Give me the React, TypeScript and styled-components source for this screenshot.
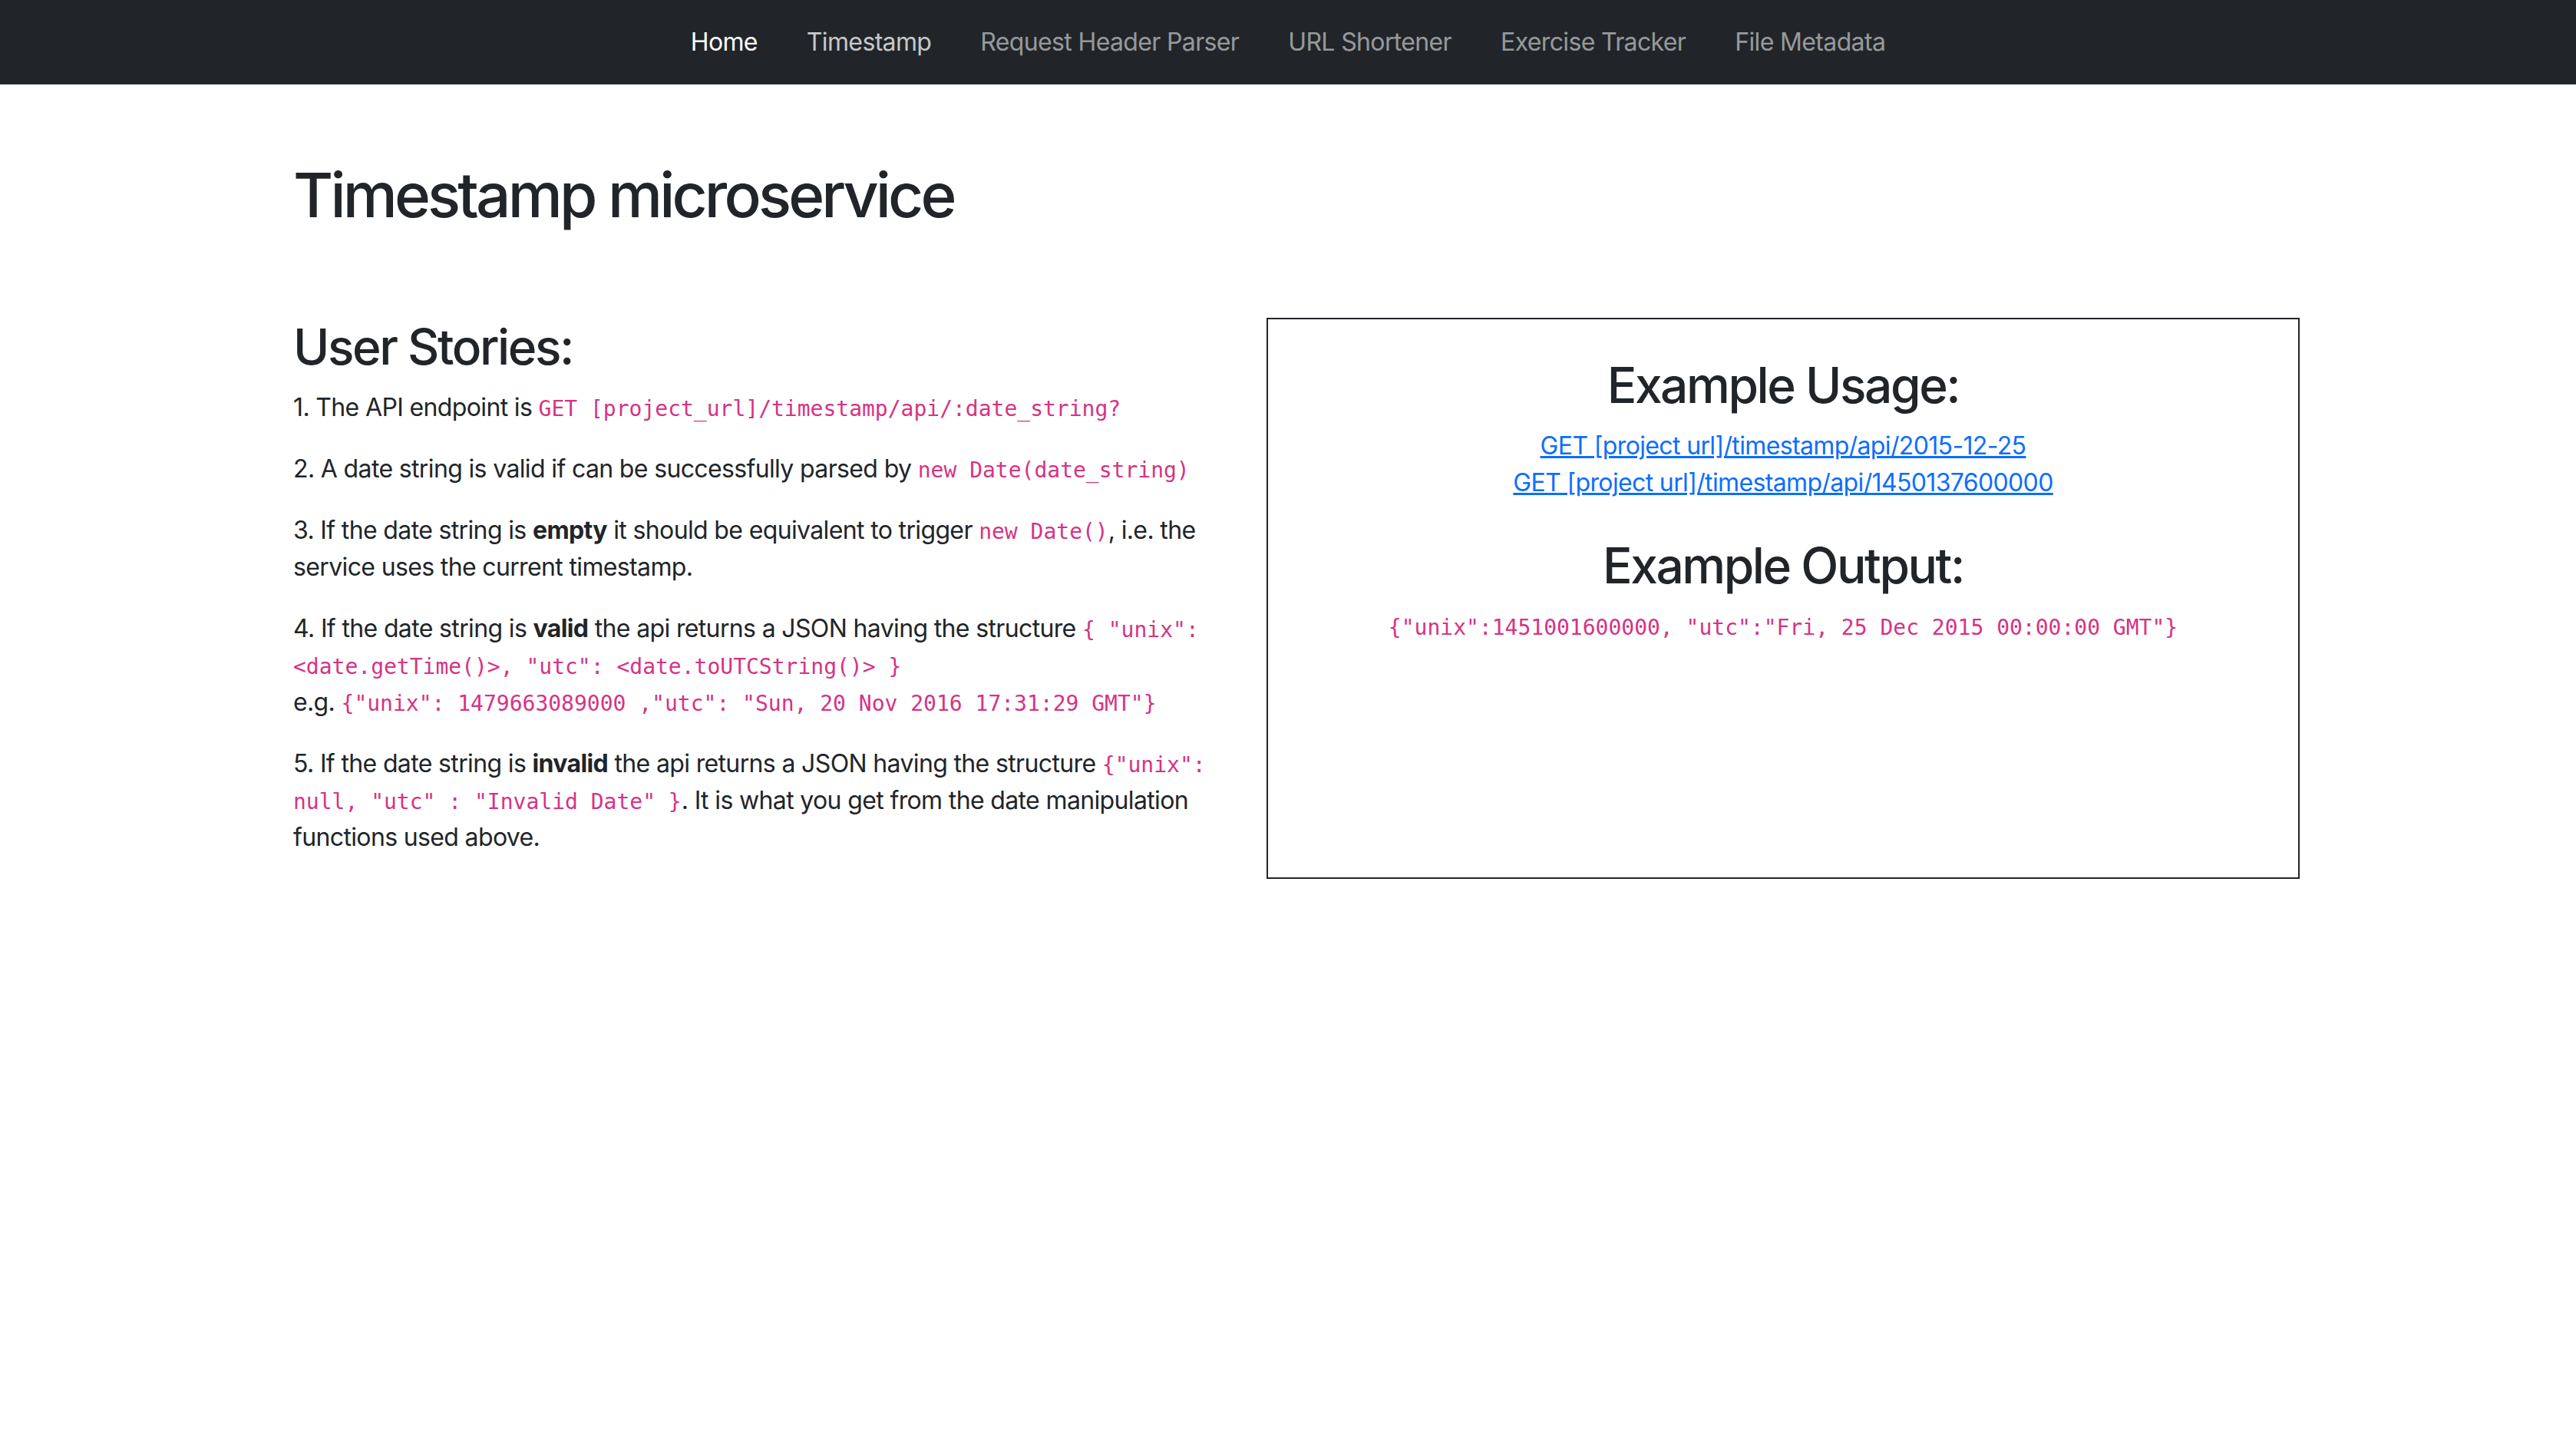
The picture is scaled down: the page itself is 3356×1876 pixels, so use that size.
import React from 'react';
import styled, { createGlobalStyle } from 'styled-components';

const GlobalStyle = createGlobalStyle`
  body {
    margin: 0;
    background: #fff;
    color: #212529;
    font-family: Inter, "Noto Sans", "Liberation Sans", sans-serif;
    font-size: 32px;
    line-height: 48px;
    letter-spacing: -0.02em;
  }
`;

// top bar
const Navbar = styled.nav`
  height: 110px;
  background: #212529;
  display: flex;
  justify-content: center;
  align-items: center;
`;
const NavLink = styled.a<{ $state?: 'active' | 'hover' }>`
  padding: 16px 32px;
  font-size: 32px;
  line-height: 48px;
  text-decoration: none;
  cursor: pointer;
  color: ${(p) =>
    p.$state === 'active'
      ? '#fff'
      : p.$state === 'hover'
      ? 'rgba(255,255,255,0.75)'
      : 'rgba(255,255,255,0.55)'};
`;

const Container = styled.main`
  width: 2614px;
  margin: 96px 0 0 382px;
`;
const Title = styled.h1`
  font-size: 80px;
  font-weight: 500;
  line-height: 1.2;
  letter-spacing: -0.048em;
  margin: 0 0 16px;
`;
const Row = styled.div`
  display: flex;
  align-items: flex-start;
  gap: 28px;
  margin-top: 112px;
`;
const Stories = styled.section`
  flex: 0 0 1240px;
`;
const Heading = styled.h2<{ $spaced?: boolean }>`
  font-size: 64px;
  font-weight: 500;
  line-height: 1.2;
  letter-spacing: -0.038em;
  margin: ${(p) => (p.$spaced ? '46px' : '0')} 0 16px;
`;
const Para = styled.p`
  margin: 0 0 32px;
`;
const Code = styled.code`
  font-family: "DejaVu Sans Mono", "Liberation Mono", monospace;
  font-size: 28px;
  line-height: 1;
  letter-spacing: 0;
  color: #d63384;
  word-wrap: break-word;
`;
const ExampleBox = styled.section`
  flex: 1;
  height: 731px;
  box-sizing: border-box;
  border: 2px solid #212529;
  padding: 48px;
  text-align: center;
`;
const Links = styled.div`
  margin-bottom: 16px;
`;
const Link = styled.a`
  display: block;
  color: #0d6efd;
  text-decoration: underline;
`;

const navItems = [
  { label: 'Home', state: 'active' as const },
  { label: 'Timestamp', state: 'hover' as const },
  { label: 'Request Header Parser' },
  { label: 'URL Shortener' },
  { label: 'Exercise Tracker' },
  { label: 'File Metadata' },
];

function App() {
  return (
    <>
      <GlobalStyle />
      <Navbar>
        {navItems.map((n) => (
          <NavLink key={n.label} $state={n.state}>
            {n.label}
          </NavLink>
        ))}
      </Navbar>
      <Container>
        <Title>Timestamp microservice</Title>
        <Row>
          <Stories>
            <Heading>User Stories:</Heading>
            <Para>
              1. The API endpoint is <Code>GET [project_url]/timestamp/api/:date_string?</Code>
            </Para>
            <Para>
              2. A date string is valid if can be successfully parsed by <Code>new Date(date_string)</Code>
            </Para>
            <Para>
              3. If the date string is <b>empty</b> it should be equivalent to trigger <Code>new Date()</Code>, i.e. the
              service uses the current timestamp.
            </Para>
            <Para>
              4. If the date string is <b>valid</b> the api returns a JSON having the structure{' '}
              <Code>{'{ "unix": <date.getTime()>, "utc": <date.toUTCString()> }'}</Code>
              <br />
              e.g. <Code>{'{"unix": 1479663089000 ,"utc": "Sun, 20 Nov 2016 17:31:29 GMT"}'}</Code>
            </Para>
            <Para>
              5. If the date string is <b>invalid</b> the api returns a JSON having the structure{' '}
              <Code>{'{"unix": null, "utc" : "Invalid Date" }'}</Code>. It is what you get from the date manipulation
              functions used above.
            </Para>
          </Stories>
          <ExampleBox>
            <Heading>Example Usage:</Heading>
            <Links>
              <Link href="#">GET [project url]/timestamp/api/2015-12-25</Link>
              <Link href="#">GET [project url]/timestamp/api/1450137600000</Link>
            </Links>
            <Heading $spaced>Example Output:</Heading>
            <Para>
              <Code>{'{"unix":1451001600000, "utc":"Fri, 25 Dec 2015 00:00:00 GMT"}'}</Code>
            </Para>
          </ExampleBox>
        </Row>
      </Container>
    </>
  );
}

export default App;
